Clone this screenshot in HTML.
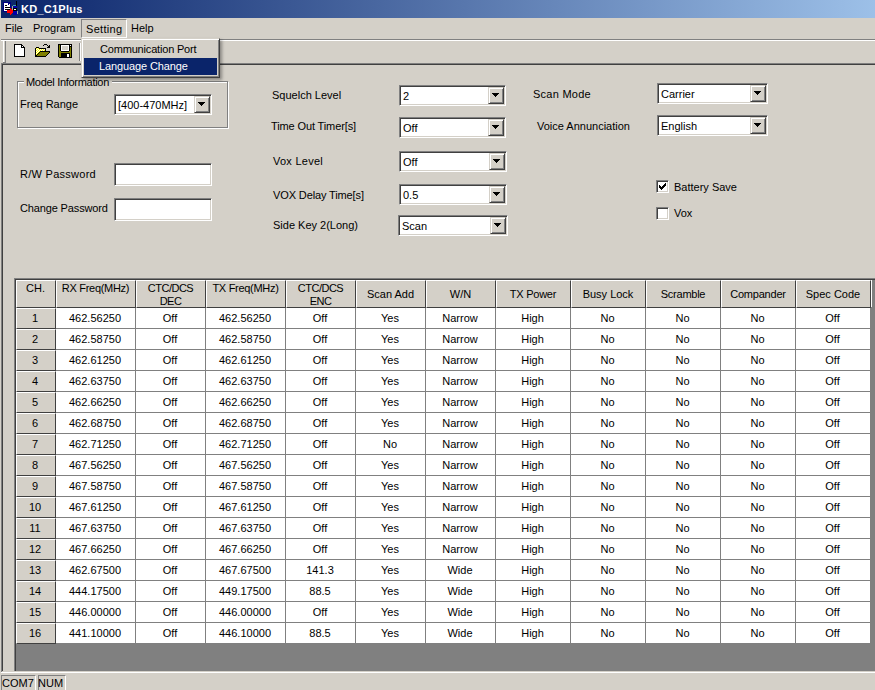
<!DOCTYPE html>
<html><head><meta charset="utf-8">
<style>
html,body{margin:0;padding:0;}
body{width:875px;height:690px;overflow:hidden;background:#D4D0C8;position:relative;font-family:"Liberation Sans",sans-serif;font-size:11px;color:#000;}
div{box-sizing:border-box;}
.a{position:absolute;}
.t{position:absolute;white-space:pre;font-size:11px;line-height:13px;}
.sunk{position:absolute;background:#fff;border:1px solid;border-color:#808080 #fff #fff #808080;box-shadow:inset 1px 1px #404040,inset -1px -1px #D4D0C8;}
.btn{position:absolute;background:#D4D0C8;border:1px solid;border-color:#D4D0C8 #404040 #404040 #D4D0C8;box-shadow:inset 1px 1px #fff,inset -1px -1px #808080;}
.arr{position:absolute;width:0;height:0;border-left:3.5px solid transparent;border-right:3.5px solid transparent;border-top:4px solid #000;}
.hl{position:absolute;background:#808080;height:1px;}
.wl{position:absolute;background:#fff;height:1px;}
.hc{position:absolute;top:280px;height:28px;background:#D4D0C8;border-top:1px solid #fff;border-left:1px solid #fff;border-right:1px solid #404040;border-bottom:1px solid #404040;}
.rh{position:absolute;left:16px;width:40px;height:21px;background:#D4D0C8;border-top:1px solid #fff;border-left:1px solid #fff;border-right:1px solid #404040;border-bottom:1px solid #404040;}
.gl{position:absolute;left:56px;width:815px;height:1px;background:#808080;}
.vl{position:absolute;top:308px;width:1px;height:336px;background:#808080;}
.c{position:absolute;white-space:pre;text-align:center;font-size:11px;line-height:13px;}
</style></head><body>

<!-- title bar -->
<div class="a" style="left:1px;top:0;width:874px;height:18px;background:linear-gradient(to right,#0A246A 0px,#A6CAF0 929px);"></div>
<div class="t" style="left:21px;top:3px;color:#fff;font-weight:bold;letter-spacing:0.25px;">KD_C1Plus</div>

<!-- menu bar -->
<div class="t" style="left:5px;top:22px;">File</div>
<div class="t" style="left:33px;top:22px;">Program</div>
<div class="a" style="left:81px;top:19px;width:46px;height:19px;border:1px solid;border-color:#808080 #fff #fff #808080;"></div>
<div class="t" style="left:86px;top:23px;letter-spacing:0.3px;">Setting</div>
<div class="t" style="left:131px;top:22px;">Help</div>

<!-- toolbar -->
<div class="hl" style="left:1px;top:39px;width:874px;"></div>
<div class="wl" style="left:1px;top:40px;width:874px;"></div>
<div class="a" style="left:3px;top:41px;width:1px;height:21px;background:#fff;"></div>
<div class="a" style="left:5px;top:41px;width:1px;height:22px;background:#808080;"></div>
<div class="a" style="left:3px;top:62px;width:3px;height:1px;background:#808080;"></div>
<div class="a" style="left:79px;top:43px;width:1px;height:18px;background:#808080;"></div>
<div class="a" style="left:80px;top:43px;width:1px;height:18px;background:#fff;"></div>

<!-- client area edge -->
<div class="a" style="left:1px;top:63px;width:874px;height:1px;background:#808080;"></div>
<div class="a" style="left:1px;top:63px;width:1px;height:609px;background:#808080;"></div>
<div class="a" style="left:2px;top:64px;width:873px;height:1px;background:#404040;"></div>
<div class="a" style="left:2px;top:64px;width:1px;height:607px;background:#404040;"></div>


<!-- group box -->
<div class="a" style="left:18px;top:82px;width:211px;height:47px;border:1px solid #fff;"></div>
<div class="a" style="left:17px;top:81px;width:211px;height:47px;border:1px solid #808080;"></div>
<div class="a" style="left:24px;top:76px;width:88px;height:10px;background:#D4D0C8;"></div>
<div class="t" style="left:26px;top:76px;letter-spacing:-0.3px;">Model Information</div>
<div class="t" style="left:20px;top:98px;">Freq Range</div>
<div class="sunk" style="left:114px;top:94px;width:98px;height:21px;"></div>
<div class="t" style="left:118px;top:99px;">[400-470MHz]</div>
<div class="btn" style="left:194px;top:96px;width:16px;height:17px;"></div>
<svg class="a" style="left:198px;top:102px" width="7" height="4" shape-rendering="crispEdges"><path d="M0 0h7v1h-1v1h-1v1h-1v1h-1v-1h-1v-1h-1v-1h-1z"/></svg>
<!-- passwords -->
<div class="t" style="left:20px;top:168px;letter-spacing:0.27px;">R/W Password</div>
<div class="sunk" style="left:114px;top:163px;width:98px;height:23px;"></div>
<div class="t" style="left:20px;top:202px;letter-spacing:-0.14px;">Change Password</div>
<div class="sunk" style="left:114px;top:198px;width:98px;height:23px;"></div>
<!-- middle column -->
<div class="t" style="left:272px;top:89px;">Squelch Level</div>
<div class="t" style="left:271px;top:120px;letter-spacing:-0.12px;">Time Out Timer[s]</div>
<div class="t" style="left:273px;top:155px;letter-spacing:0.25px;">Vox Level</div>
<div class="t" style="left:273px;top:189px;letter-spacing:-0.12px;">VOX Delay Time[s]</div>
<div class="t" style="left:273px;top:219px;">Side Key 2(Long)</div>
<div class="sunk" style="left:399px;top:85px;width:107px;height:21px;"></div>
<div class="t" style="left:403px;top:90px;">2</div>
<div class="btn" style="left:488px;top:87px;width:16px;height:17px;"></div>
<svg class="a" style="left:492px;top:93px" width="7" height="4" shape-rendering="crispEdges"><path d="M0 0h7v1h-1v1h-1v1h-1v1h-1v-1h-1v-1h-1v-1h-1z"/></svg>
<div class="sunk" style="left:399px;top:117px;width:107px;height:21px;"></div>
<div class="t" style="left:403px;top:122px;">Off</div>
<div class="btn" style="left:488px;top:119px;width:16px;height:17px;"></div>
<svg class="a" style="left:492px;top:125px" width="7" height="4" shape-rendering="crispEdges"><path d="M0 0h7v1h-1v1h-1v1h-1v1h-1v-1h-1v-1h-1v-1h-1z"/></svg>
<div class="sunk" style="left:399px;top:151px;width:108px;height:21px;"></div>
<div class="t" style="left:403px;top:156px;">Off</div>
<div class="btn" style="left:489px;top:153px;width:16px;height:17px;"></div>
<svg class="a" style="left:493px;top:159px" width="7" height="4" shape-rendering="crispEdges"><path d="M0 0h7v1h-1v1h-1v1h-1v1h-1v-1h-1v-1h-1v-1h-1z"/></svg>
<div class="sunk" style="left:399px;top:184px;width:108px;height:21px;"></div>
<div class="t" style="left:403px;top:189px;">0.5</div>
<div class="btn" style="left:489px;top:186px;width:16px;height:17px;"></div>
<svg class="a" style="left:493px;top:192px" width="7" height="4" shape-rendering="crispEdges"><path d="M0 0h7v1h-1v1h-1v1h-1v1h-1v-1h-1v-1h-1v-1h-1z"/></svg>
<div class="sunk" style="left:398px;top:215px;width:110px;height:21px;"></div>
<div class="t" style="left:402px;top:220px;">Scan</div>
<div class="btn" style="left:490px;top:217px;width:16px;height:17px;"></div>
<svg class="a" style="left:494px;top:223px" width="7" height="4" shape-rendering="crispEdges"><path d="M0 0h7v1h-1v1h-1v1h-1v1h-1v-1h-1v-1h-1v-1h-1z"/></svg>
<!-- right column -->
<div class="t" style="left:533px;top:88px;letter-spacing:0.25px;">Scan Mode</div>
<div class="t" style="left:537px;top:120px;">Voice Annunciation</div>
<div class="sunk" style="left:657px;top:83px;width:111px;height:21px;"></div>
<div class="t" style="left:661px;top:88px;">Carrier</div>
<div class="btn" style="left:750px;top:85px;width:16px;height:17px;"></div>
<svg class="a" style="left:754px;top:91px" width="7" height="4" shape-rendering="crispEdges"><path d="M0 0h7v1h-1v1h-1v1h-1v1h-1v-1h-1v-1h-1v-1h-1z"/></svg>
<div class="sunk" style="left:657px;top:115px;width:111px;height:21px;"></div>
<div class="t" style="left:661px;top:120px;">English</div>
<div class="btn" style="left:750px;top:117px;width:16px;height:17px;"></div>
<svg class="a" style="left:754px;top:123px" width="7" height="4" shape-rendering="crispEdges"><path d="M0 0h7v1h-1v1h-1v1h-1v1h-1v-1h-1v-1h-1v-1h-1z"/></svg>
<div class="sunk" style="left:656px;top:180px;width:13px;height:13px;"></div>
<svg class="a" style="left:659px;top:183px" width="7" height="7" viewBox="0 0 7 7" shape-rendering="crispEdges"><path d="M0 2h1v3h-1zM1 3h1v3h-1zM2 4h1v3h-1zM3 3h1v3h-1zM4 2h1v3h-1zM5 1h1v3h-1zM6 0h1v3h-1z" fill="#000"/></svg>
<div class="t" style="left:674px;top:181px;">Battery Save</div>
<div class="sunk" style="left:656px;top:207px;width:13px;height:13px;"></div>
<div class="t" style="left:674px;top:207px;">Vox</div>

<!-- grid -->
<div class="a" style="left:14px;top:278px;width:861px;height:393px;background:#808080;border-top:1px solid #808080;border-left:1px solid #808080;box-shadow:inset 1px 1px #404040;"></div>
<div class="hc" style="left:16px;width:40px"></div>
<div class="hc" style="left:56px;width:80px"></div>
<div class="hc" style="left:136px;width:70px"></div>
<div class="hc" style="left:206px;width:80px"></div>
<div class="hc" style="left:286px;width:70px"></div>
<div class="hc" style="left:356px;width:70px"></div>
<div class="hc" style="left:426px;width:70px"></div>
<div class="hc" style="left:496px;width:75px"></div>
<div class="hc" style="left:571px;width:75px"></div>
<div class="hc" style="left:646px;width:75px"></div>
<div class="hc" style="left:721px;width:75px"></div>
<div class="hc" style="left:796px;width:75px"></div>
<div class="a" style="left:871px;top:280px;width:1px;height:27px;background:#fff;"></div>
<div class="a" style="left:56px;top:308px;width:815px;height:336px;background:#fff;"></div>
<div class="rh" style="top:308px"></div>
<div class="gl" style="top:328px"></div>
<div class="rh" style="top:329px"></div>
<div class="gl" style="top:349px"></div>
<div class="rh" style="top:350px"></div>
<div class="gl" style="top:370px"></div>
<div class="rh" style="top:371px"></div>
<div class="gl" style="top:391px"></div>
<div class="rh" style="top:392px"></div>
<div class="gl" style="top:412px"></div>
<div class="rh" style="top:413px"></div>
<div class="gl" style="top:433px"></div>
<div class="rh" style="top:434px"></div>
<div class="gl" style="top:454px"></div>
<div class="rh" style="top:455px"></div>
<div class="gl" style="top:475px"></div>
<div class="rh" style="top:476px"></div>
<div class="gl" style="top:496px"></div>
<div class="rh" style="top:497px"></div>
<div class="gl" style="top:517px"></div>
<div class="rh" style="top:518px"></div>
<div class="gl" style="top:538px"></div>
<div class="rh" style="top:539px"></div>
<div class="gl" style="top:559px"></div>
<div class="rh" style="top:560px"></div>
<div class="gl" style="top:580px"></div>
<div class="rh" style="top:581px"></div>
<div class="gl" style="top:601px"></div>
<div class="rh" style="top:602px"></div>
<div class="gl" style="top:622px"></div>
<div class="rh" style="top:623px"></div>
<div class="gl" style="top:643px"></div>
<div class="vl" style="left:135px"></div>
<div class="vl" style="left:205px"></div>
<div class="vl" style="left:285px"></div>
<div class="vl" style="left:355px"></div>
<div class="vl" style="left:425px"></div>
<div class="vl" style="left:495px"></div>
<div class="vl" style="left:570px"></div>
<div class="vl" style="left:645px"></div>
<div class="vl" style="left:720px"></div>
<div class="vl" style="left:795px"></div>
<div class="vl" style="left:870px"></div>
<div class="c" style="left:16px;top:282px;width:39px">CH.</div>
<div class="c" style="left:56px;top:282px;width:79px;letter-spacing:-0.3px">RX Freq(MHz)</div>
<div class="c" style="left:136px;top:282px;width:69px;letter-spacing:-0.5px">CTC/DCS<br>DEC</div>
<div class="c" style="left:206px;top:282px;width:79px;letter-spacing:-0.3px">TX Freq(MHz)</div>
<div class="c" style="left:286px;top:282px;width:69px;letter-spacing:-0.5px">CTC/DCS<br>ENC</div>
<div class="c" style="left:356px;top:288px;width:69px">Scan Add</div>
<div class="c" style="left:426px;top:288px;width:69px">W/N</div>
<div class="c" style="left:496px;top:288px;width:74px;letter-spacing:-0.25px">TX Power</div>
<div class="c" style="left:571px;top:288px;width:74px">Busy Lock</div>
<div class="c" style="left:646px;top:288px;width:74px;letter-spacing:-0.25px">Scramble</div>
<div class="c" style="left:721px;top:288px;width:74px;letter-spacing:-0.2px">Compander</div>
<div class="c" style="left:796px;top:288px;width:74px">Spec Code</div>
<div class="c" style="left:16px;top:312px;width:38px">1</div>
<div class="c" style="left:56px;top:312px;width:78px">462.56250</div>
<div class="c" style="left:136px;top:312px;width:68px">Off</div>
<div class="c" style="left:206px;top:312px;width:78px">462.56250</div>
<div class="c" style="left:286px;top:312px;width:68px">Off</div>
<div class="c" style="left:356px;top:312px;width:68px">Yes</div>
<div class="c" style="left:426px;top:312px;width:68px">Narrow</div>
<div class="c" style="left:496px;top:312px;width:73px">High</div>
<div class="c" style="left:571px;top:312px;width:73px">No</div>
<div class="c" style="left:646px;top:312px;width:73px">No</div>
<div class="c" style="left:721px;top:312px;width:73px">No</div>
<div class="c" style="left:796px;top:312px;width:73px">Off</div>
<div class="c" style="left:16px;top:333px;width:38px">2</div>
<div class="c" style="left:56px;top:333px;width:78px">462.58750</div>
<div class="c" style="left:136px;top:333px;width:68px">Off</div>
<div class="c" style="left:206px;top:333px;width:78px">462.58750</div>
<div class="c" style="left:286px;top:333px;width:68px">Off</div>
<div class="c" style="left:356px;top:333px;width:68px">Yes</div>
<div class="c" style="left:426px;top:333px;width:68px">Narrow</div>
<div class="c" style="left:496px;top:333px;width:73px">High</div>
<div class="c" style="left:571px;top:333px;width:73px">No</div>
<div class="c" style="left:646px;top:333px;width:73px">No</div>
<div class="c" style="left:721px;top:333px;width:73px">No</div>
<div class="c" style="left:796px;top:333px;width:73px">Off</div>
<div class="c" style="left:16px;top:354px;width:38px">3</div>
<div class="c" style="left:56px;top:354px;width:78px">462.61250</div>
<div class="c" style="left:136px;top:354px;width:68px">Off</div>
<div class="c" style="left:206px;top:354px;width:78px">462.61250</div>
<div class="c" style="left:286px;top:354px;width:68px">Off</div>
<div class="c" style="left:356px;top:354px;width:68px">Yes</div>
<div class="c" style="left:426px;top:354px;width:68px">Narrow</div>
<div class="c" style="left:496px;top:354px;width:73px">High</div>
<div class="c" style="left:571px;top:354px;width:73px">No</div>
<div class="c" style="left:646px;top:354px;width:73px">No</div>
<div class="c" style="left:721px;top:354px;width:73px">No</div>
<div class="c" style="left:796px;top:354px;width:73px">Off</div>
<div class="c" style="left:16px;top:375px;width:38px">4</div>
<div class="c" style="left:56px;top:375px;width:78px">462.63750</div>
<div class="c" style="left:136px;top:375px;width:68px">Off</div>
<div class="c" style="left:206px;top:375px;width:78px">462.63750</div>
<div class="c" style="left:286px;top:375px;width:68px">Off</div>
<div class="c" style="left:356px;top:375px;width:68px">Yes</div>
<div class="c" style="left:426px;top:375px;width:68px">Narrow</div>
<div class="c" style="left:496px;top:375px;width:73px">High</div>
<div class="c" style="left:571px;top:375px;width:73px">No</div>
<div class="c" style="left:646px;top:375px;width:73px">No</div>
<div class="c" style="left:721px;top:375px;width:73px">No</div>
<div class="c" style="left:796px;top:375px;width:73px">Off</div>
<div class="c" style="left:16px;top:396px;width:38px">5</div>
<div class="c" style="left:56px;top:396px;width:78px">462.66250</div>
<div class="c" style="left:136px;top:396px;width:68px">Off</div>
<div class="c" style="left:206px;top:396px;width:78px">462.66250</div>
<div class="c" style="left:286px;top:396px;width:68px">Off</div>
<div class="c" style="left:356px;top:396px;width:68px">Yes</div>
<div class="c" style="left:426px;top:396px;width:68px">Narrow</div>
<div class="c" style="left:496px;top:396px;width:73px">High</div>
<div class="c" style="left:571px;top:396px;width:73px">No</div>
<div class="c" style="left:646px;top:396px;width:73px">No</div>
<div class="c" style="left:721px;top:396px;width:73px">No</div>
<div class="c" style="left:796px;top:396px;width:73px">Off</div>
<div class="c" style="left:16px;top:417px;width:38px">6</div>
<div class="c" style="left:56px;top:417px;width:78px">462.68750</div>
<div class="c" style="left:136px;top:417px;width:68px">Off</div>
<div class="c" style="left:206px;top:417px;width:78px">462.68750</div>
<div class="c" style="left:286px;top:417px;width:68px">Off</div>
<div class="c" style="left:356px;top:417px;width:68px">Yes</div>
<div class="c" style="left:426px;top:417px;width:68px">Narrow</div>
<div class="c" style="left:496px;top:417px;width:73px">High</div>
<div class="c" style="left:571px;top:417px;width:73px">No</div>
<div class="c" style="left:646px;top:417px;width:73px">No</div>
<div class="c" style="left:721px;top:417px;width:73px">No</div>
<div class="c" style="left:796px;top:417px;width:73px">Off</div>
<div class="c" style="left:16px;top:438px;width:38px">7</div>
<div class="c" style="left:56px;top:438px;width:78px">462.71250</div>
<div class="c" style="left:136px;top:438px;width:68px">Off</div>
<div class="c" style="left:206px;top:438px;width:78px">462.71250</div>
<div class="c" style="left:286px;top:438px;width:68px">Off</div>
<div class="c" style="left:356px;top:438px;width:68px">No</div>
<div class="c" style="left:426px;top:438px;width:68px">Narrow</div>
<div class="c" style="left:496px;top:438px;width:73px">High</div>
<div class="c" style="left:571px;top:438px;width:73px">No</div>
<div class="c" style="left:646px;top:438px;width:73px">No</div>
<div class="c" style="left:721px;top:438px;width:73px">No</div>
<div class="c" style="left:796px;top:438px;width:73px">Off</div>
<div class="c" style="left:16px;top:459px;width:38px">8</div>
<div class="c" style="left:56px;top:459px;width:78px">467.56250</div>
<div class="c" style="left:136px;top:459px;width:68px">Off</div>
<div class="c" style="left:206px;top:459px;width:78px">467.56250</div>
<div class="c" style="left:286px;top:459px;width:68px">Off</div>
<div class="c" style="left:356px;top:459px;width:68px">Yes</div>
<div class="c" style="left:426px;top:459px;width:68px">Narrow</div>
<div class="c" style="left:496px;top:459px;width:73px">High</div>
<div class="c" style="left:571px;top:459px;width:73px">No</div>
<div class="c" style="left:646px;top:459px;width:73px">No</div>
<div class="c" style="left:721px;top:459px;width:73px">No</div>
<div class="c" style="left:796px;top:459px;width:73px">Off</div>
<div class="c" style="left:16px;top:480px;width:38px">9</div>
<div class="c" style="left:56px;top:480px;width:78px">467.58750</div>
<div class="c" style="left:136px;top:480px;width:68px">Off</div>
<div class="c" style="left:206px;top:480px;width:78px">467.58750</div>
<div class="c" style="left:286px;top:480px;width:68px">Off</div>
<div class="c" style="left:356px;top:480px;width:68px">Yes</div>
<div class="c" style="left:426px;top:480px;width:68px">Narrow</div>
<div class="c" style="left:496px;top:480px;width:73px">High</div>
<div class="c" style="left:571px;top:480px;width:73px">No</div>
<div class="c" style="left:646px;top:480px;width:73px">No</div>
<div class="c" style="left:721px;top:480px;width:73px">No</div>
<div class="c" style="left:796px;top:480px;width:73px">Off</div>
<div class="c" style="left:16px;top:501px;width:38px">10</div>
<div class="c" style="left:56px;top:501px;width:78px">467.61250</div>
<div class="c" style="left:136px;top:501px;width:68px">Off</div>
<div class="c" style="left:206px;top:501px;width:78px">467.61250</div>
<div class="c" style="left:286px;top:501px;width:68px">Off</div>
<div class="c" style="left:356px;top:501px;width:68px">Yes</div>
<div class="c" style="left:426px;top:501px;width:68px">Narrow</div>
<div class="c" style="left:496px;top:501px;width:73px">High</div>
<div class="c" style="left:571px;top:501px;width:73px">No</div>
<div class="c" style="left:646px;top:501px;width:73px">No</div>
<div class="c" style="left:721px;top:501px;width:73px">No</div>
<div class="c" style="left:796px;top:501px;width:73px">Off</div>
<div class="c" style="left:16px;top:522px;width:38px">11</div>
<div class="c" style="left:56px;top:522px;width:78px">467.63750</div>
<div class="c" style="left:136px;top:522px;width:68px">Off</div>
<div class="c" style="left:206px;top:522px;width:78px">467.63750</div>
<div class="c" style="left:286px;top:522px;width:68px">Off</div>
<div class="c" style="left:356px;top:522px;width:68px">Yes</div>
<div class="c" style="left:426px;top:522px;width:68px">Narrow</div>
<div class="c" style="left:496px;top:522px;width:73px">High</div>
<div class="c" style="left:571px;top:522px;width:73px">No</div>
<div class="c" style="left:646px;top:522px;width:73px">No</div>
<div class="c" style="left:721px;top:522px;width:73px">No</div>
<div class="c" style="left:796px;top:522px;width:73px">Off</div>
<div class="c" style="left:16px;top:543px;width:38px">12</div>
<div class="c" style="left:56px;top:543px;width:78px">467.66250</div>
<div class="c" style="left:136px;top:543px;width:68px">Off</div>
<div class="c" style="left:206px;top:543px;width:78px">467.66250</div>
<div class="c" style="left:286px;top:543px;width:68px">Off</div>
<div class="c" style="left:356px;top:543px;width:68px">Yes</div>
<div class="c" style="left:426px;top:543px;width:68px">Narrow</div>
<div class="c" style="left:496px;top:543px;width:73px">High</div>
<div class="c" style="left:571px;top:543px;width:73px">No</div>
<div class="c" style="left:646px;top:543px;width:73px">No</div>
<div class="c" style="left:721px;top:543px;width:73px">No</div>
<div class="c" style="left:796px;top:543px;width:73px">Off</div>
<div class="c" style="left:16px;top:564px;width:38px">13</div>
<div class="c" style="left:56px;top:564px;width:78px">462.67500</div>
<div class="c" style="left:136px;top:564px;width:68px">Off</div>
<div class="c" style="left:206px;top:564px;width:78px">467.67500</div>
<div class="c" style="left:286px;top:564px;width:68px">141.3</div>
<div class="c" style="left:356px;top:564px;width:68px">Yes</div>
<div class="c" style="left:426px;top:564px;width:68px">Wide</div>
<div class="c" style="left:496px;top:564px;width:73px">High</div>
<div class="c" style="left:571px;top:564px;width:73px">No</div>
<div class="c" style="left:646px;top:564px;width:73px">No</div>
<div class="c" style="left:721px;top:564px;width:73px">No</div>
<div class="c" style="left:796px;top:564px;width:73px">Off</div>
<div class="c" style="left:16px;top:585px;width:38px">14</div>
<div class="c" style="left:56px;top:585px;width:78px">444.17500</div>
<div class="c" style="left:136px;top:585px;width:68px">Off</div>
<div class="c" style="left:206px;top:585px;width:78px">449.17500</div>
<div class="c" style="left:286px;top:585px;width:68px">88.5</div>
<div class="c" style="left:356px;top:585px;width:68px">Yes</div>
<div class="c" style="left:426px;top:585px;width:68px">Wide</div>
<div class="c" style="left:496px;top:585px;width:73px">High</div>
<div class="c" style="left:571px;top:585px;width:73px">No</div>
<div class="c" style="left:646px;top:585px;width:73px">No</div>
<div class="c" style="left:721px;top:585px;width:73px">No</div>
<div class="c" style="left:796px;top:585px;width:73px">Off</div>
<div class="c" style="left:16px;top:606px;width:38px">15</div>
<div class="c" style="left:56px;top:606px;width:78px">446.00000</div>
<div class="c" style="left:136px;top:606px;width:68px">Off</div>
<div class="c" style="left:206px;top:606px;width:78px">446.00000</div>
<div class="c" style="left:286px;top:606px;width:68px">Off</div>
<div class="c" style="left:356px;top:606px;width:68px">Yes</div>
<div class="c" style="left:426px;top:606px;width:68px">Wide</div>
<div class="c" style="left:496px;top:606px;width:73px">High</div>
<div class="c" style="left:571px;top:606px;width:73px">No</div>
<div class="c" style="left:646px;top:606px;width:73px">No</div>
<div class="c" style="left:721px;top:606px;width:73px">No</div>
<div class="c" style="left:796px;top:606px;width:73px">Off</div>
<div class="c" style="left:16px;top:627px;width:38px">16</div>
<div class="c" style="left:56px;top:627px;width:78px">441.10000</div>
<div class="c" style="left:136px;top:627px;width:68px">Off</div>
<div class="c" style="left:206px;top:627px;width:78px">446.10000</div>
<div class="c" style="left:286px;top:627px;width:68px">88.5</div>
<div class="c" style="left:356px;top:627px;width:68px">Yes</div>
<div class="c" style="left:426px;top:627px;width:68px">Wide</div>
<div class="c" style="left:496px;top:627px;width:73px">High</div>
<div class="c" style="left:571px;top:627px;width:73px">No</div>
<div class="c" style="left:646px;top:627px;width:73px">No</div>
<div class="c" style="left:721px;top:627px;width:73px">No</div>
<div class="c" style="left:796px;top:627px;width:73px">Off</div>

<svg class="a" style="left:14px;top:44px" width="11" height="13" shape-rendering="crispEdges"><rect x="0" y="0" width="8" height="1" fill="#000"/><rect x="0" y="1" width="1" height="1" fill="#000"/><rect x="1" y="1" width="6" height="1" fill="#fff"/><rect x="7" y="1" width="2" height="1" fill="#000"/><rect x="0" y="2" width="1" height="1" fill="#000"/><rect x="1" y="2" width="6" height="1" fill="#fff"/><rect x="7" y="2" width="1" height="1" fill="#000"/><rect x="8" y="2" width="1" height="1" fill="#fff"/><rect x="9" y="2" width="1" height="1" fill="#000"/><rect x="0" y="3" width="1" height="1" fill="#000"/><rect x="1" y="3" width="6" height="1" fill="#fff"/><rect x="7" y="3" width="4" height="1" fill="#000"/><rect x="0" y="4" width="1" height="1" fill="#000"/><rect x="1" y="4" width="9" height="1" fill="#fff"/><rect x="10" y="4" width="1" height="1" fill="#000"/><rect x="0" y="5" width="1" height="1" fill="#000"/><rect x="1" y="5" width="9" height="1" fill="#fff"/><rect x="10" y="5" width="1" height="1" fill="#000"/><rect x="0" y="6" width="1" height="1" fill="#000"/><rect x="1" y="6" width="9" height="1" fill="#fff"/><rect x="10" y="6" width="1" height="1" fill="#000"/><rect x="0" y="7" width="1" height="1" fill="#000"/><rect x="1" y="7" width="9" height="1" fill="#fff"/><rect x="10" y="7" width="1" height="1" fill="#000"/><rect x="0" y="8" width="1" height="1" fill="#000"/><rect x="1" y="8" width="9" height="1" fill="#fff"/><rect x="10" y="8" width="1" height="1" fill="#000"/><rect x="0" y="9" width="1" height="1" fill="#000"/><rect x="1" y="9" width="9" height="1" fill="#fff"/><rect x="10" y="9" width="1" height="1" fill="#000"/><rect x="0" y="10" width="1" height="1" fill="#000"/><rect x="1" y="10" width="9" height="1" fill="#fff"/><rect x="10" y="10" width="1" height="1" fill="#000"/><rect x="0" y="11" width="1" height="1" fill="#000"/><rect x="1" y="11" width="9" height="1" fill="#fff"/><rect x="10" y="11" width="1" height="1" fill="#000"/><rect x="0" y="12" width="11" height="1" fill="#000"/></svg>
<svg class="a" style="left:34px;top:43px" width="16" height="14" shape-rendering="crispEdges"><rect x="10" y="1" width="3" height="1" fill="#000"/><rect x="9" y="2" width="1" height="1" fill="#000"/><rect x="13" y="2" width="1" height="1" fill="#000"/><rect x="15" y="2" width="1" height="1" fill="#000"/><rect x="14" y="3" width="2" height="1" fill="#000"/><rect x="2" y="4" width="3" height="1" fill="#000"/><rect x="13" y="4" width="3" height="1" fill="#000"/><rect x="1" y="5" width="1" height="1" fill="#000"/><rect x="2" y="5" width="1" height="1" fill="#ff0"/><rect x="3" y="5" width="1" height="1" fill="#fff"/><rect x="4" y="5" width="1" height="1" fill="#ff0"/><rect x="5" y="5" width="7" height="1" fill="#000"/><rect x="1" y="6" width="1" height="1" fill="#000"/><rect x="2" y="6" width="1" height="1" fill="#fff"/><rect x="3" y="6" width="1" height="1" fill="#ff0"/><rect x="4" y="6" width="1" height="1" fill="#fff"/><rect x="5" y="6" width="1" height="1" fill="#ff0"/><rect x="6" y="6" width="1" height="1" fill="#fff"/><rect x="7" y="6" width="1" height="1" fill="#ff0"/><rect x="8" y="6" width="1" height="1" fill="#fff"/><rect x="9" y="6" width="1" height="1" fill="#ff0"/><rect x="10" y="6" width="1" height="1" fill="#fff"/><rect x="11" y="6" width="1" height="1" fill="#000"/><rect x="1" y="7" width="1" height="1" fill="#000"/><rect x="2" y="7" width="1" height="1" fill="#ff0"/><rect x="3" y="7" width="1" height="1" fill="#fff"/><rect x="4" y="7" width="1" height="1" fill="#ff0"/><rect x="5" y="7" width="1" height="1" fill="#fff"/><rect x="6" y="7" width="1" height="1" fill="#ff0"/><rect x="7" y="7" width="1" height="1" fill="#fff"/><rect x="8" y="7" width="1" height="1" fill="#ff0"/><rect x="9" y="7" width="1" height="1" fill="#fff"/><rect x="10" y="7" width="1" height="1" fill="#ff0"/><rect x="11" y="7" width="1" height="1" fill="#000"/><rect x="1" y="8" width="1" height="1" fill="#000"/><rect x="2" y="8" width="1" height="1" fill="#fff"/><rect x="3" y="8" width="1" height="1" fill="#ff0"/><rect x="4" y="8" width="1" height="1" fill="#fff"/><rect x="5" y="8" width="1" height="1" fill="#ff0"/><rect x="6" y="8" width="10" height="1" fill="#000"/><rect x="1" y="9" width="1" height="1" fill="#000"/><rect x="2" y="9" width="1" height="1" fill="#ff0"/><rect x="3" y="9" width="1" height="1" fill="#fff"/><rect x="4" y="9" width="1" height="1" fill="#ff0"/><rect x="5" y="9" width="1" height="1" fill="#000"/><rect x="6" y="9" width="9" height="1" fill="#808000"/><rect x="15" y="9" width="1" height="1" fill="#000"/><rect x="1" y="10" width="1" height="1" fill="#000"/><rect x="2" y="10" width="1" height="1" fill="#fff"/><rect x="3" y="10" width="1" height="1" fill="#ff0"/><rect x="4" y="10" width="1" height="1" fill="#000"/><rect x="5" y="10" width="9" height="1" fill="#808000"/><rect x="14" y="10" width="1" height="1" fill="#000"/><rect x="1" y="11" width="1" height="1" fill="#000"/><rect x="2" y="11" width="1" height="1" fill="#ff0"/><rect x="3" y="11" width="1" height="1" fill="#000"/><rect x="4" y="11" width="9" height="1" fill="#808000"/><rect x="13" y="11" width="1" height="1" fill="#000"/><rect x="1" y="12" width="2" height="1" fill="#000"/><rect x="3" y="12" width="9" height="1" fill="#808000"/><rect x="12" y="12" width="1" height="1" fill="#000"/><rect x="1" y="13" width="11" height="1" fill="#000"/></svg>
<svg class="a" style="left:57px;top:43px" width="16" height="15" shape-rendering="crispEdges"><rect x="1" y="1" width="14" height="1" fill="#000"/><rect x="1" y="2" width="1" height="1" fill="#000"/><rect x="2" y="2" width="1" height="1" fill="#808000"/><rect x="3" y="2" width="1" height="1" fill="#000"/><rect x="4" y="2" width="8" height="1" fill="#fff"/><rect x="12" y="2" width="1" height="1" fill="#000"/><rect x="13" y="2" width="1" height="1" fill="#fff"/><rect x="14" y="2" width="1" height="1" fill="#000"/><rect x="1" y="3" width="1" height="1" fill="#000"/><rect x="2" y="3" width="1" height="1" fill="#808000"/><rect x="3" y="3" width="1" height="1" fill="#000"/><rect x="4" y="3" width="1" height="1" fill="#fff"/><rect x="5" y="3" width="6" height="1" fill="#D4D0C8"/><rect x="11" y="3" width="1" height="1" fill="#fff"/><rect x="12" y="3" width="3" height="1" fill="#000"/><rect x="1" y="4" width="1" height="1" fill="#000"/><rect x="2" y="4" width="1" height="1" fill="#808000"/><rect x="3" y="4" width="1" height="1" fill="#000"/><rect x="4" y="4" width="1" height="1" fill="#fff"/><rect x="5" y="4" width="6" height="1" fill="#D4D0C8"/><rect x="11" y="4" width="1" height="1" fill="#fff"/><rect x="12" y="4" width="1" height="1" fill="#000"/><rect x="13" y="4" width="1" height="1" fill="#808000"/><rect x="14" y="4" width="1" height="1" fill="#000"/><rect x="1" y="5" width="1" height="1" fill="#000"/><rect x="2" y="5" width="1" height="1" fill="#808000"/><rect x="3" y="5" width="1" height="1" fill="#000"/><rect x="4" y="5" width="1" height="1" fill="#fff"/><rect x="5" y="5" width="6" height="1" fill="#D4D0C8"/><rect x="11" y="5" width="1" height="1" fill="#fff"/><rect x="12" y="5" width="1" height="1" fill="#000"/><rect x="13" y="5" width="1" height="1" fill="#808000"/><rect x="14" y="5" width="1" height="1" fill="#000"/><rect x="1" y="6" width="1" height="1" fill="#000"/><rect x="2" y="6" width="1" height="1" fill="#808000"/><rect x="3" y="6" width="1" height="1" fill="#000"/><rect x="4" y="6" width="1" height="1" fill="#fff"/><rect x="5" y="6" width="6" height="1" fill="#D4D0C8"/><rect x="11" y="6" width="1" height="1" fill="#fff"/><rect x="12" y="6" width="1" height="1" fill="#000"/><rect x="13" y="6" width="1" height="1" fill="#808000"/><rect x="14" y="6" width="1" height="1" fill="#000"/><rect x="1" y="7" width="1" height="1" fill="#000"/><rect x="2" y="7" width="1" height="1" fill="#808000"/><rect x="3" y="7" width="1" height="1" fill="#000"/><rect x="4" y="7" width="8" height="1" fill="#fff"/><rect x="12" y="7" width="1" height="1" fill="#000"/><rect x="13" y="7" width="1" height="1" fill="#808000"/><rect x="14" y="7" width="1" height="1" fill="#000"/><rect x="1" y="8" width="1" height="1" fill="#000"/><rect x="2" y="8" width="2" height="1" fill="#808000"/><rect x="4" y="8" width="8" height="1" fill="#000"/><rect x="12" y="8" width="2" height="1" fill="#808000"/><rect x="14" y="8" width="1" height="1" fill="#000"/><rect x="1" y="9" width="1" height="1" fill="#000"/><rect x="2" y="9" width="12" height="1" fill="#808000"/><rect x="14" y="9" width="1" height="1" fill="#000"/><rect x="1" y="10" width="1" height="1" fill="#000"/><rect x="2" y="10" width="2" height="1" fill="#808000"/><rect x="4" y="10" width="9" height="1" fill="#000"/><rect x="13" y="10" width="1" height="1" fill="#808000"/><rect x="14" y="10" width="1" height="1" fill="#000"/><rect x="1" y="11" width="1" height="1" fill="#000"/><rect x="2" y="11" width="2" height="1" fill="#808000"/><rect x="4" y="11" width="6" height="1" fill="#000"/><rect x="10" y="11" width="2" height="1" fill="#fff"/><rect x="12" y="11" width="1" height="1" fill="#000"/><rect x="13" y="11" width="1" height="1" fill="#808000"/><rect x="14" y="11" width="1" height="1" fill="#000"/><rect x="1" y="12" width="1" height="1" fill="#000"/><rect x="2" y="12" width="2" height="1" fill="#808000"/><rect x="4" y="12" width="6" height="1" fill="#000"/><rect x="10" y="12" width="2" height="1" fill="#fff"/><rect x="12" y="12" width="1" height="1" fill="#000"/><rect x="13" y="12" width="1" height="1" fill="#808000"/><rect x="14" y="12" width="1" height="1" fill="#000"/><rect x="1" y="13" width="1" height="1" fill="#000"/><rect x="2" y="13" width="2" height="1" fill="#808000"/><rect x="4" y="13" width="6" height="1" fill="#000"/><rect x="10" y="13" width="2" height="1" fill="#fff"/><rect x="12" y="13" width="1" height="1" fill="#000"/><rect x="13" y="13" width="1" height="1" fill="#808000"/><rect x="14" y="13" width="1" height="1" fill="#000"/><rect x="2" y="14" width="13" height="1" fill="#000"/></svg>
<svg class="a" style="left:3px;top:0px" width="16" height="16" shape-rendering="crispEdges"><rect x="13" y="1" width="1" height="1" fill="#000"/><rect x="0" y="2" width="8" height="1" fill="#000080"/><rect x="13" y="2" width="1" height="1" fill="#000"/><rect x="0" y="3" width="1" height="1" fill="#000080"/><rect x="1" y="3" width="4" height="1" fill="#fff"/><rect x="5" y="3" width="3" height="1" fill="#000080"/><rect x="13" y="3" width="1" height="1" fill="#000"/><rect x="0" y="4" width="1" height="1" fill="#000080"/><rect x="1" y="4" width="4" height="1" fill="#fff"/><rect x="5" y="4" width="1" height="1" fill="#000080"/><rect x="6" y="4" width="1" height="1" fill="#fff"/><rect x="7" y="4" width="1" height="1" fill="#000080"/><rect x="13" y="4" width="1" height="1" fill="#000"/><rect x="0" y="5" width="1" height="1" fill="#000080"/><rect x="1" y="5" width="1" height="1" fill="#fff"/><rect x="2" y="5" width="2" height="1" fill="#000"/><rect x="4" y="5" width="3" height="1" fill="#fff"/><rect x="7" y="5" width="1" height="1" fill="#000080"/><rect x="10" y="5" width="3" height="1" fill="#40a0a0"/><rect x="13" y="5" width="1" height="1" fill="#000"/><rect x="0" y="6" width="1" height="1" fill="#000080"/><rect x="1" y="6" width="6" height="1" fill="#fff"/><rect x="7" y="6" width="1" height="1" fill="#000080"/><rect x="9" y="6" width="1" height="1" fill="#a0a8a0"/><rect x="10" y="6" width="4" height="1" fill="#0000a8"/><rect x="0" y="7" width="1" height="1" fill="#000080"/><rect x="1" y="7" width="1" height="1" fill="#fff"/><rect x="2" y="7" width="5" height="1" fill="#000"/><rect x="7" y="7" width="1" height="1" fill="#000080"/><rect x="9" y="7" width="1" height="1" fill="#a0a8a0"/><rect x="10" y="7" width="4" height="1" fill="#0000a8"/><rect x="0" y="8" width="1" height="1" fill="#000080"/><rect x="1" y="8" width="6" height="1" fill="#fff"/><rect x="7" y="8" width="1" height="1" fill="#f00"/><rect x="9" y="8" width="1" height="1" fill="#a0a8a0"/><rect x="10" y="8" width="4" height="1" fill="#000"/><rect x="0" y="9" width="1" height="1" fill="#000080"/><rect x="1" y="9" width="1" height="1" fill="#fff"/><rect x="2" y="9" width="5" height="1" fill="#000"/><rect x="7" y="9" width="2" height="1" fill="#f00"/><rect x="9" y="9" width="1" height="1" fill="#a0a8a0"/><rect x="10" y="9" width="1" height="1" fill="#000"/><rect x="11" y="9" width="2" height="1" fill="#fff"/><rect x="13" y="9" width="1" height="1" fill="#000"/><rect x="0" y="10" width="1" height="1" fill="#000080"/><rect x="1" y="10" width="3" height="1" fill="#fff"/><rect x="4" y="10" width="6" height="1" fill="#f00"/><rect x="10" y="10" width="4" height="1" fill="#000"/><rect x="0" y="11" width="4" height="1" fill="#000080"/><rect x="4" y="11" width="6" height="1" fill="#f00"/><rect x="10" y="11" width="4" height="1" fill="#0000a8"/><rect x="14" y="11" width="1" height="1" fill="#a0a8a0"/><rect x="4" y="12" width="6" height="1" fill="#f00"/><rect x="10" y="12" width="4" height="1" fill="#0000a8"/><rect x="14" y="12" width="1" height="1" fill="#a0a8a0"/><rect x="7" y="13" width="2" height="1" fill="#f00"/><rect x="10" y="13" width="4" height="1" fill="#0000a8"/><rect x="14" y="13" width="1" height="1" fill="#a0a8a0"/><rect x="7" y="14" width="1" height="1" fill="#f00"/><rect x="10" y="14" width="4" height="1" fill="#0000a8"/></svg>
<!-- popup menu -->
<div class="a" style="left:81px;top:38px;width:139px;height:40px;background:#D4D0C8;border:1px solid;border-color:#D4D0C8 #404040 #404040 #D4D0C8;box-shadow:inset 1px 1px #fff,inset -1px -1px #808080,2px 2px 3px rgba(0,0,0,0.35);"></div>
<div class="t" style="left:100px;top:43px;letter-spacing:-0.18px;">Communication Port</div>
<div class="a" style="left:84px;top:58px;width:133px;height:17px;background:#0A246A;"></div>
<div class="t" style="left:99px;top:60px;color:#fff;letter-spacing:-0.12px;">Language Change</div>


<div class="a" style="left:2px;top:671px;width:873px;height:1px;background:#D4D0C8;"></div>
<div class="a" style="left:1px;top:672px;width:874px;height:1px;background:#fff;"></div>
<!-- status bar -->
<div class="a" style="left:1px;top:675px;width:35px;height:15px;border-left:1px solid #808080;border-top:1px solid #808080;border-right:1px solid #fff;"></div>
<div class="t" style="left:2px;top:677px;">COM7</div>
<div class="a" style="left:38px;top:675px;width:28px;height:15px;border-left:1px solid #808080;border-top:1px solid #808080;border-right:1px solid #fff;"></div>
<div class="t" style="left:38px;top:677px;">NUM</div>

</body></html>
